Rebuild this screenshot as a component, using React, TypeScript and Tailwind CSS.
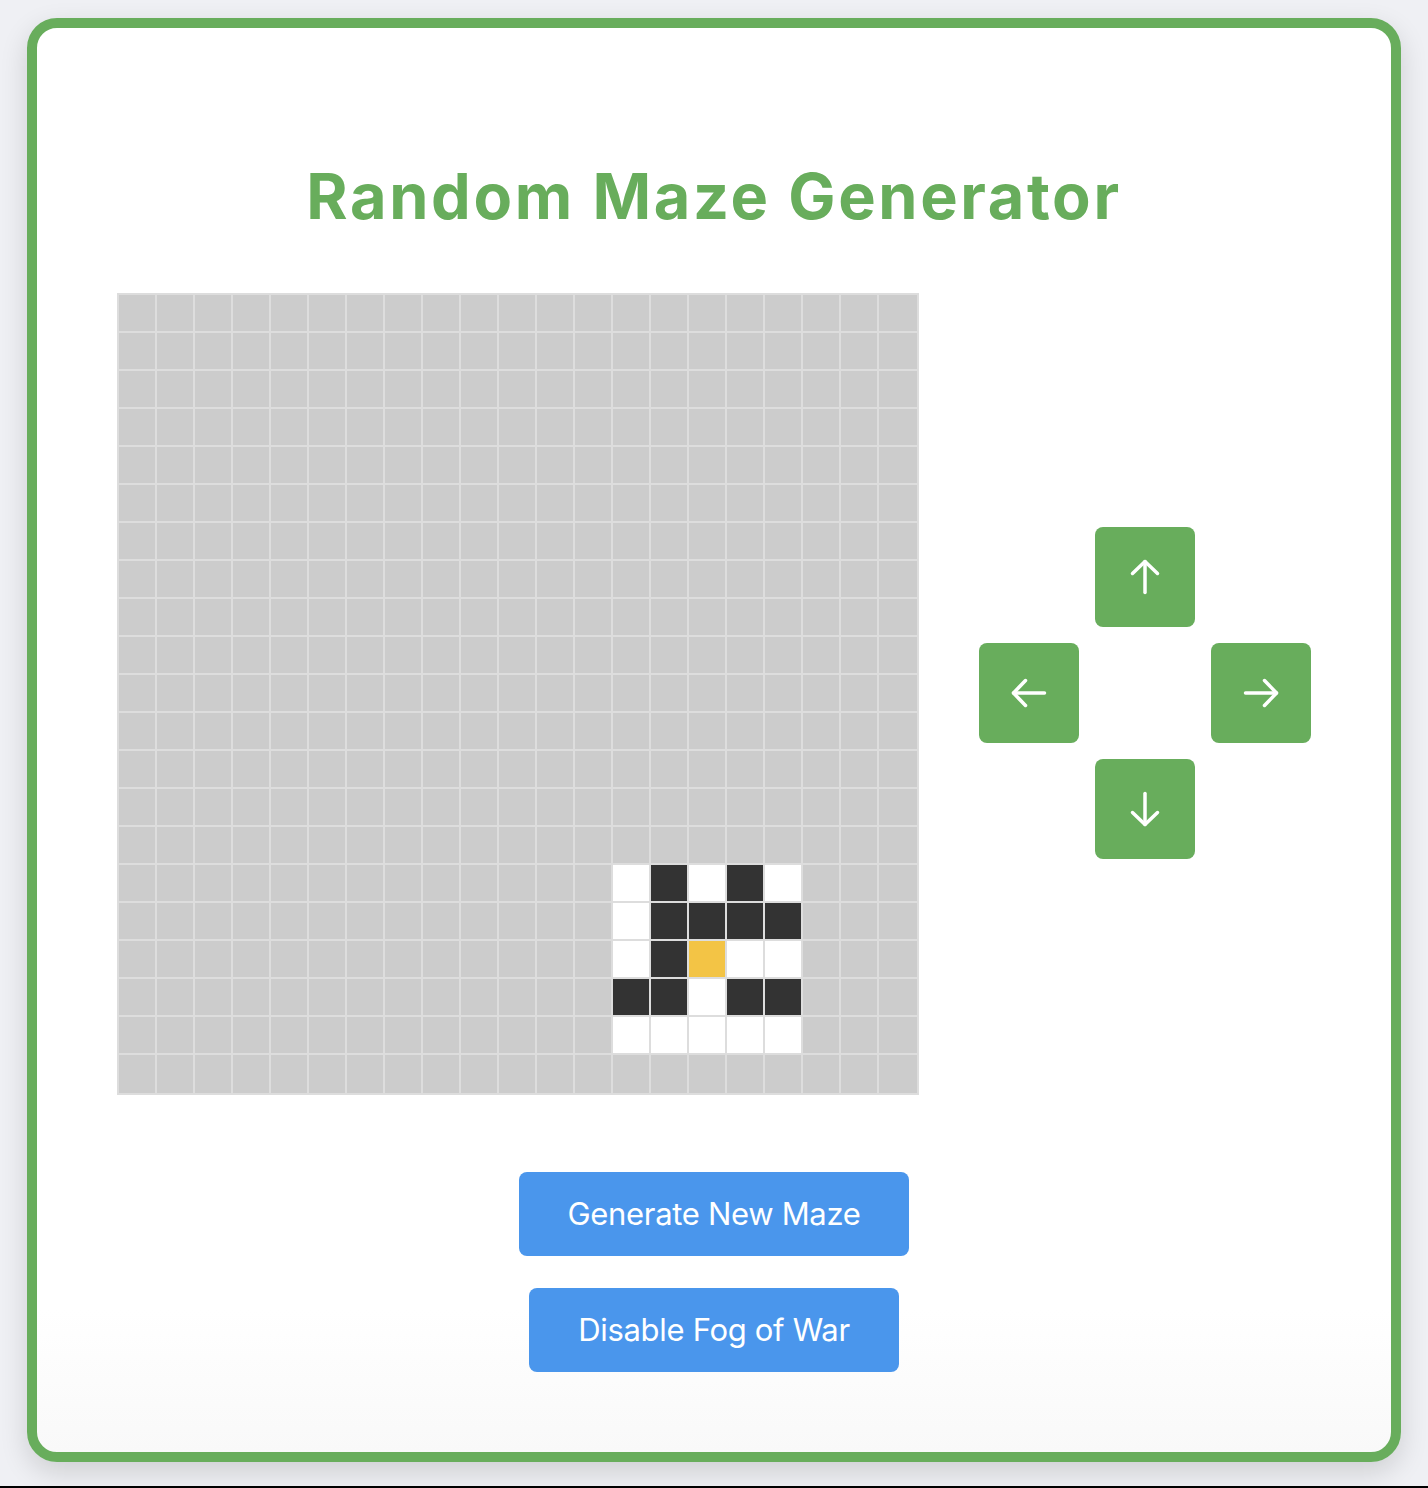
import React from "react";

const SIZE = 21;

// revealed patch around the player: rows 15-19, cols 13-17
// w = path, b = wall, p = player
const REVEALED: Record<number, string> = {
    15: "wbwbw",
    16: "wbbbb",
    17: "wbpww",
    18: "bbwbb",
    19: "wwwww",
};

const cellColor = (r: number, c: number) => {
    const row = REVEALED[r];
    if (!row || c < 13 || c > 17) return "bg-[#cccccc]";
    const k = row[c - 13];
    if (k === "b") return "bg-[#333333]";
    if (k === "p") return "bg-[#f3c445]";
    return "bg-white";
};

const Arrow = ({ className }: { className?: string }) => (
    <svg width="40" height="40" viewBox="0 0 40 40" fill="none" stroke="white" strokeWidth="3.5" strokeLinecap="round" strokeLinejoin="round" className={className}>
        <path d="M20 4.5V35.5" />
        <path d="M7.5 16.5L20 4.5L32.5 16.5" />
    </svg>
);

const ArrowButton = ({ className, iconClass }: { className?: string; iconClass?: string }) => (
    <button className={`w-[100px] h-[100px] rounded-[8px] bg-[#68ad5c] flex items-center justify-center ${className ?? ""}`}>
        <Arrow className={iconClass} />
    </button>
);

export default function App() {
    const cells = [];
    for (let r = 0; r < SIZE; r++) {
        for (let c = 0; c < SIZE; c++) {
            cells.push(<div key={`${r}-${c}`} className={`border border-[#dddddd] ${cellColor(r, c)}`} />);
        }
    }

    return (
        <div className="h-[1488px] flex flex-col bg-[#eff0f4] font-['Inter',sans-serif]">
            <div className="pt-[18px] px-[27px]">
                <div className="h-[1444px] rounded-[30px] border-[10px] border-[#68ad5c] bg-linear-to-b from-white from-90% to-[#f9f9f9] shadow-[0_10px_28px_rgba(0,0,0,0.14)] flex flex-col items-center">

                    {/* Titulo */}
                    <h1 className="mt-[137px] text-[63px] leading-none font-bold tracking-[0.042em] text-[#68ad5c]">
                        Random Maze Generator
                    </h1>

                    {/* Laberinto + controles */}
                    <div className="mt-[65px] flex items-center gap-[60px]">
                        <div className="border border-[#dddddd] grid grid-cols-[repeat(20,38px)_40px] grid-rows-[repeat(20,38px)_40px]">
                            {cells}
                        </div>

                        <div className="mb-[2px] grid grid-cols-[repeat(3,100px)] grid-rows-[repeat(3,100px)] gap-[16px]">
                            <ArrowButton className="col-start-2 row-start-1" />
                            <ArrowButton className="col-start-1 row-start-2" iconClass="-rotate-90" />
                            <ArrowButton className="col-start-3 row-start-2" iconClass="rotate-90" />
                            <ArrowButton className="col-start-2 row-start-3" iconClass="rotate-180" />
                        </div>
                    </div>

                    {/* Botones */}
                    <div className="mt-[77px] flex flex-col items-center gap-[32px]">
                        <button className="w-[390px] h-[84px] rounded-[8px] bg-[#4a96ec] text-white text-[31px] tracking-[-0.01em]">
                            Generate New Maze
                        </button>
                        <button className="w-[370px] h-[84px] rounded-[8px] bg-[#4a96ec] text-white text-[31px] tracking-[-0.01em]">
                            Disable Fog of War
                        </button>
                    </div>
                </div>
            </div>
            <div className="flex-1" />
            <div className="h-[2px] bg-black" />
        </div>
    );
}
